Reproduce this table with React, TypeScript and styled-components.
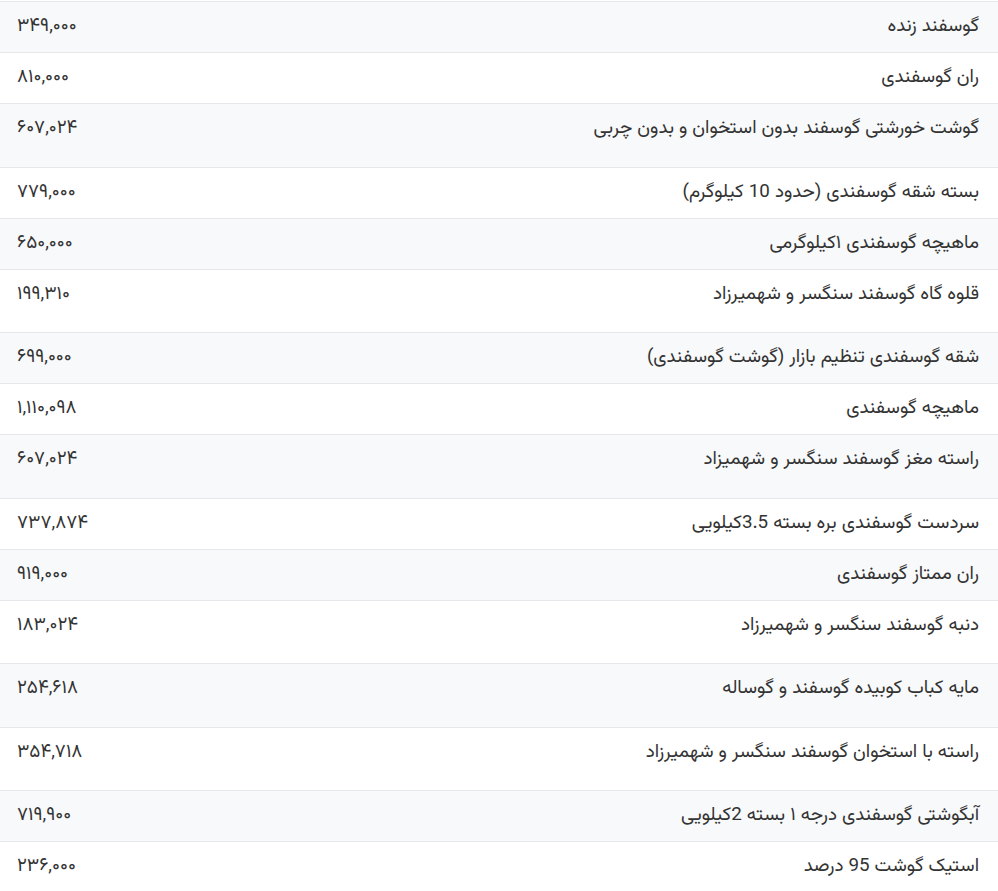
import React from "react";
import styled, { createGlobalStyle } from "styled-components";

const GlobalStyle = createGlobalStyle`
  html, body {
    margin: 0;
    padding: 0;
    background: #ffffff;
  }
  body {
    font-family: Vazirmatn, Roboto, "DejaVu Sans", "Noto Sans", sans-serif;
    color: #333333;
  }
`;

const Table = styled.div`
  direction: rtl;
  margin-top: 1px;
  display: flex;
  flex-direction: column;
`;

const Row = styled.div<{ $striped: boolean; $tall: boolean }>`
  display: flex;
  justify-content: space-between;
  align-items: flex-start;
  border-top: 1px solid #e5e7eb;
  background: ${(p) => (p.$striped ? "#f8f9fa" : "#ffffff")};
  padding: 12px 19px ${(p) => (p.$tall ? "25.5px" : "13px")} 17px;
`;

const Name = styled.div`
  font-size: 18.8px;
  line-height: 25px;
  text-align: right;
  white-space: nowrap;
`;

const Price = styled.div`
  direction: ltr;
  text-align: left;
  font-size: 18.8px;
  line-height: 25px;
  white-space: nowrap;
`;

type Item = { name: string; price: string; tall?: boolean };

const items: Item[] = [
  { name: "گوسفند زنده", price: "۳۴۹,۰۰۰" },
  { name: "ران گوسفندی", price: "۸۱۰,۰۰۰" },
  { name: "گوشت خورشتی گوسفند بدون استخوان و بدون چربی", price: "۶۰۷,۰۲۴", tall: true },
  { name: "بسته شقه گوسفندی (حدود 10 کیلوگرم)", price: "۷۷۹,۰۰۰" },
  { name: "ماهیچه گوسفندی ۱کیلوگرمی", price: "۶۵۰,۰۰۰" },
  { name: "قلوه گاه گوسفند سنگسر و شهمیرزاد", price: "۱۹۹,۳۱۰", tall: true },
  { name: "شقه گوسفندی تنظیم بازار (گوشت گوسفندی)", price: "۶۹۹,۰۰۰" },
  { name: "ماهیچه گوسفندی", price: "۱,۱۱۰,۰۹۸" },
  { name: "راسته مغز گوسفند سنگسر و شهمیزاد", price: "۶۰۷,۰۲۴", tall: true },
  { name: "سردست گوسفندی بره بسته 3.5کیلویی", price: "۷۳۷,۸۷۴" },
  { name: "ران ممتاز گوسفندی", price: "۹۱۹,۰۰۰" },
  { name: "دنبه گوسفند سنگسر و شهمیرزاد", price: "۱۸۳,۰۲۴", tall: true },
  { name: "مایه کباب کوبیده گوسفند و گوساله", price: "۲۵۴,۶۱۸", tall: true },
  { name: "راسته با استخوان گوسفند سنگسر و شهمیرزاد", price: "۳۵۴,۷۱۸", tall: true },
  { name: "آبگوشتی گوسفندی درجه ۱ بسته 2کیلویی", price: "۷۱۹,۹۰۰" },
  { name: "استیک گوشت 95 درصد", price: "۲۳۶,۰۰۰" },
];

export default function App() {
  return (
    <>
      <GlobalStyle />
      <Table>
        {items.map((it, i) => (
          <Row key={i} $striped={i % 2 === 0} $tall={!!it.tall}>
            <Name>{it.name}</Name>
            <Price>{it.price}</Price>
          </Row>
        ))}
      </Table>
    </>
  );
}
